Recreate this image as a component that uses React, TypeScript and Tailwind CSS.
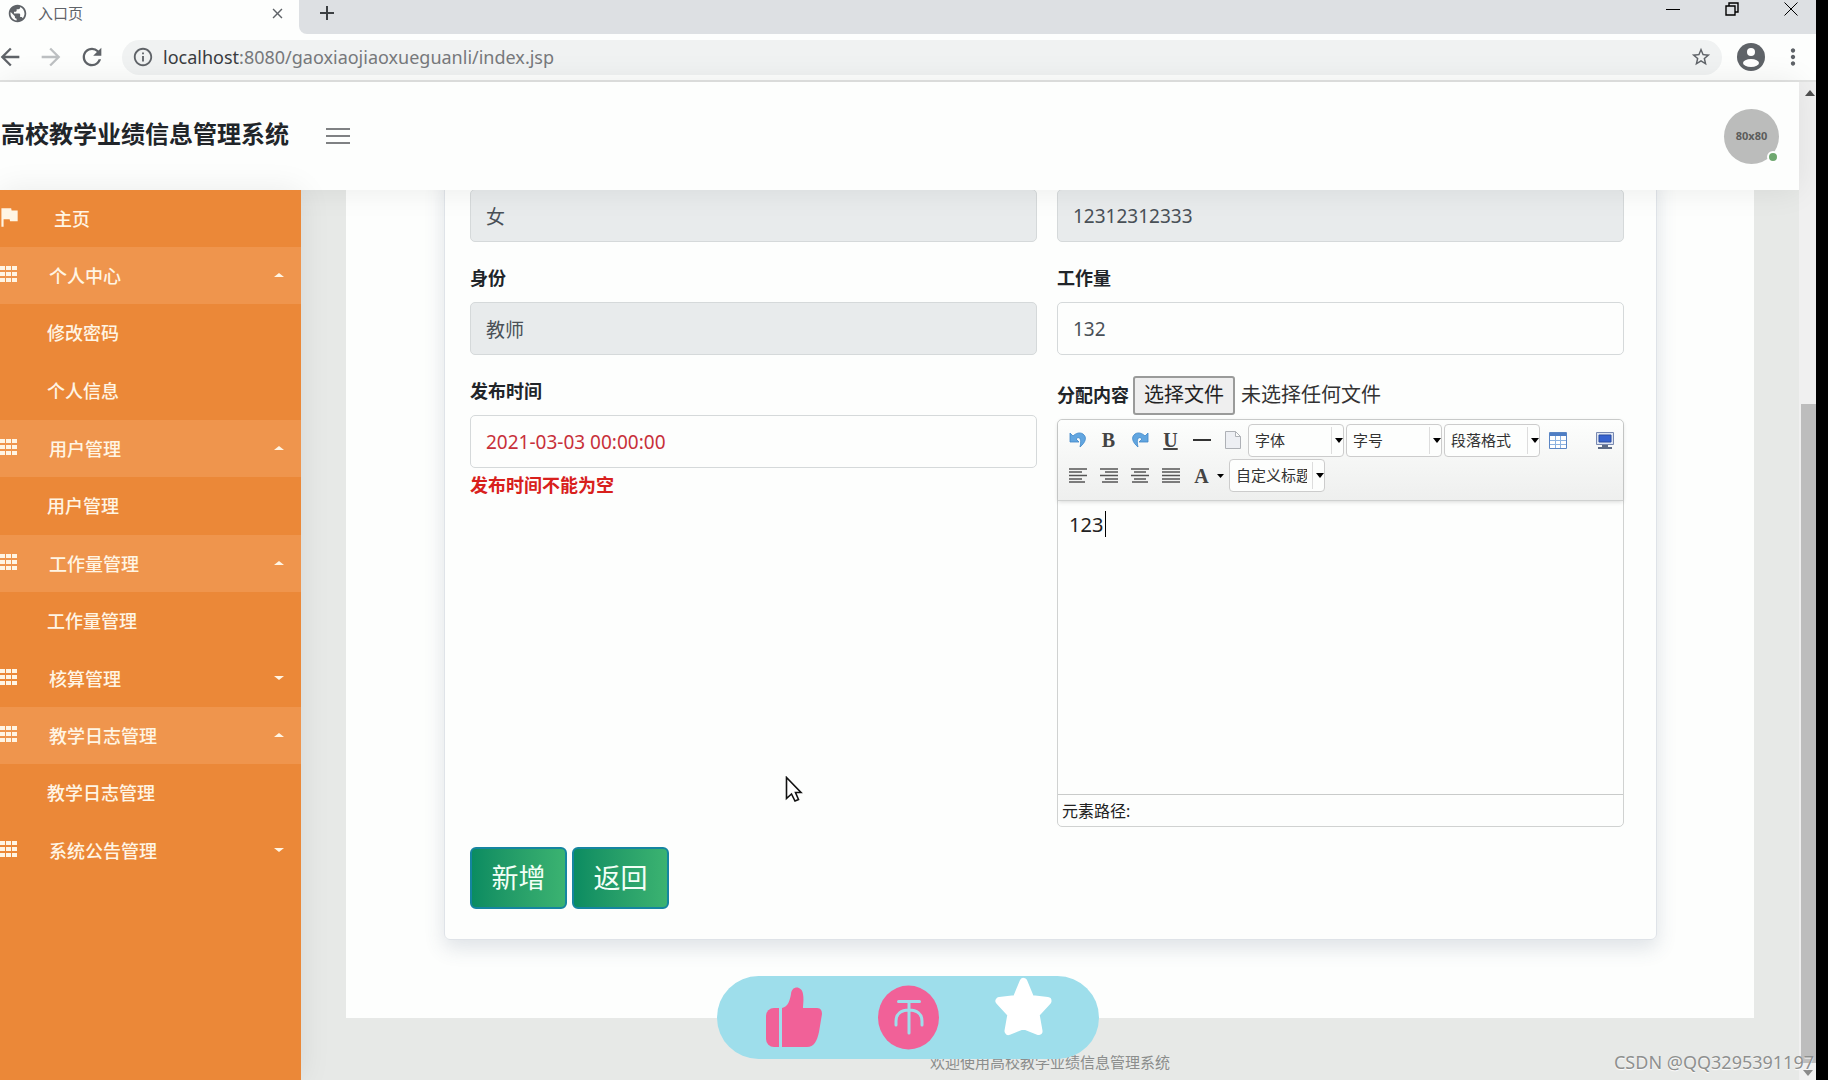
import { useRef, useState } from "react";
import type { ReactNode } from "react";
import {
  MdAdd,
  MdArrowBack,
  MdArrowForward,
  MdClose,
  MdFlag,
  MdInfoOutline,
  MdMoreVert,
  MdPublic,
  MdRefresh,
  MdStarBorder,
} from "react-icons/md";

const menus = [
  { title: "个人中心", open: true, children: ["修改密码", "个人信息"] },
  { title: "用户管理", open: true, children: ["用户管理"] },
  { title: "工作量管理", open: true, children: ["工作量管理"] },
  { title: "核算管理", open: false, children: [] },
  { title: "教学日志管理", open: true, children: ["教学日志管理"] },
  { title: "系统公告管理", open: false, children: [] },
];

function BrowserBar() {
  return (
    <div className="shrink-0">
      <div className="flex h-[34px] bg-[#fdfefd]">
        <div className="flex w-[299px] items-center pb-2 pl-[7px] pr-[13px] text-[#5f6368]">
          <MdPublic size={21} />
          <span className="ml-[10px] flex-1 text-[15px] leading-6">
            入口页
          </span>
          <button aria-label="关闭标签页">
            <MdClose size={17} />
          </button>
        </div>
        <div className="flex flex-1 rounded-bl-lg bg-[#dde0e3]">
          <div className="flex flex-1 items-center pb-2 pl-4 text-[#3c4043]">
            <button aria-label="新标签页">
              <MdAdd size={24} />
            </button>
          </div>
          <div className="flex gap-[45px] pr-[18px] pt-[2px] text-black">
            <button aria-label="最小化" className="h-[14px]">
              <svg width="14" height="14" stroke="currentColor">
                <path d="M0 7.5h14" />
              </svg>
            </button>
            <button aria-label="还原" className="h-[14px]">
              <svg
                width="14"
                height="14"
                fill="none"
                stroke="currentColor"
                strokeWidth="1.4"
              >
                <path d="M1 4h9v9H1zM4 4V1h9v9h-3" />
              </svg>
            </button>
            <button aria-label="关闭" className="h-[14px]">
              <svg width="14" height="14" stroke="currentColor">
                <path d="M.5.5l13 13M13.5.5l-13 13" />
              </svg>
            </button>
          </div>
        </div>
      </div>

      <div className="flex h-12 items-center border-b-2 border-[#e2e3e2] bg-[#fdfefd] text-[#5f6368]">
        <div className="-ml-1 mr-4 flex gap-[13px]">
          <button aria-label="后退">
            <MdArrowBack size={28} />
          </button>
          <button aria-label="前进" className="text-[#bdc0c2]">
            <MdArrowForward size={28} />
          </button>
          <button aria-label="重新加载">
            <MdRefresh size={28} />
          </button>
        </div>
        <div className="flex h-[35px] flex-1 items-center rounded-full bg-[#f0f2f2] pl-[10px] pr-[10px]">
          <MdInfoOutline size={22} />
          <span className="ml-[9px] flex-1 text-[18px] text-[#77797c]">
            <span className="text-[#3a3c3f]">localhost</span>
            :8080/gaoxiaojiaoxueguanli/index.jsp
          </span>
          <button aria-label="收藏">
            <MdStarBorder size={22} />
          </button>
        </div>
        <button aria-label="用户" className="mx-[15px]">
          <svg width="28" height="28">
            <circle cx="14" cy="14" r="14" fill="currentColor" />
            <circle cx="14" cy="9" r="4" fill="#fff" />
            <ellipse cx="14" cy="20" rx="8" ry="4" fill="#fff" />
          </svg>
        </button>
        <button aria-label="菜单" className="mr-[10px]">
          <MdMoreVert size={26} />
        </button>
      </div>
    </div>
  );
}

function Header() {
  return (
    <header className="relative z-10 flex h-[108px] shrink-0 items-center bg-[#fdfefd] pl-px pr-5 shadow-[0_0_30px_rgba(0,0,0,0.08)]">
      <h1 className="w-[325px] pb-1 text-2xl font-bold text-[#212529]">
        高校教学业绩信息管理系统
      </h1>
      <button aria-label="切换菜单" className="text-[#7f8183]">
        <svg width="24" height="18" stroke="currentColor" strokeWidth="2">
          <path d="M0 2h24M0 9h24M0 16h24" />
        </svg>
      </button>
      <div className="relative ml-auto flex size-[55px] items-center justify-center rounded-full bg-[#bbbcbb] text-[11px] font-bold text-[#5b5c5b]">
        80x80
        <span className="absolute bottom-[1px] right-0 size-3 rounded-full border-2 border-white bg-[#6fa870]" />
      </div>
    </header>
  );
}

function GridIcon() {
  return (
    <svg width="17" height="16" viewBox="0 0 17 16" fill="currentColor">
      <path d="M0 0h5v4H0zM6 0h5v4H6zM12 0h5v4h-5zM0 6h5v4H0zM6 6h5v4H6zM12 6h5v4h-5zM0 12h5v4H0zM6 12h5v4H6zM12 12h5v4h-5z" />
    </svg>
  );
}

function Sidebar() {
  return (
    <nav className="z-20 w-[301px] shrink-0 bg-[#eb8838] text-[18px] font-medium text-[#fff5e4] shadow-[0_0_30px_rgba(0,0,0,0.08)]">
      <a href="#home" className="flex h-[57px] items-center">
        <MdFlag size={26} className="-ml-1 mb-1" />
        <span className="ml-8 pt-[2px]">主页</span>
      </a>
      {menus.map((menu) => (
        <div key={menu.title}>
          <a
            href="#menu"
            className={
              menu.open
                ? "flex h-[57px] items-center bg-[#ef954d] pr-[17px]"
                : "flex h-[57px] items-center pr-[17px]"
            }
          >
            <span className="mb-1">
              <GridIcon />
            </span>
            <span className="ml-8 flex-1 pt-[2px]">{menu.title}</span>
            <svg width="10" height="4" fill="currentColor" className="mb-px">
              <path d={menu.open ? "M0 4l5-4 5 4z" : "M0 0h10L5 4z"} />
            </svg>
          </a>
          {menu.children.map((child) => (
            <a
              key={child}
              href="#sub"
              className="flex h-[58px] items-center pl-[47px]"
            >
              {child}
            </a>
          ))}
        </div>
      ))}
    </nav>
  );
}

function ToolButton({
  label,
  children,
}: {
  label: string;
  children: ReactNode;
}) {
  return (
    <button
      type="button"
      aria-label={label}
      className="flex h-8 w-[31px] items-center justify-center font-['Liberation_Serif',serif] text-[20px] font-bold text-[#444]"
    >
      {children}
    </button>
  );
}

function Combo({ label }: { label: string }) {
  return (
    <div className="mr-[2px] flex h-[33px] w-24 items-center rounded-sm border border-[#ccc] bg-[#fdfefd]">
      <select
        aria-label={label}
        className="h-[27px] w-[83px] shrink-0 appearance-none border-r border-[#ddd] pl-[6px] pr-[5px] text-[15px] text-[#333]"
      >
        <option>{label}</option>
      </select>
      <svg width="8" height="5" className="ml-[3px] shrink-0">
        <path d="M0 0h8L4 5z" />
      </svg>
    </div>
  );
}

function UndoIcon() {
  return (
    <svg width="18" height="18" viewBox="0 0 18 18">
      <path
        d="M1 2v9h9L7 8c3-3 6-1 4 8 6-5 7-10 3-13C11 1 7 2 4 5z"
        fill="#62a6e0"
        stroke="#3f86c8"
        strokeWidth=".8"
      />
    </svg>
  );
}

function Editor() {
  const [content, setContent] = useState("123");

  return (
    <div className="rounded-[5px] border border-[#d0d2d1]">
      <div className="rounded-t-[5px] border-b border-[#cfd1d0] bg-linear-to-b from-[#fdfefd] to-[#eeefee] pb-[7px] pl-1 pt-[2px] shadow-[0_1px_4px_rgba(0,0,0,0.15)]">
        <div className="flex h-[36px] items-center">
          <ToolButton label="撤销">
            <UndoIcon />
          </ToolButton>
          <ToolButton label="加粗">B</ToolButton>
          <ToolButton label="重做">
            <span className="-scale-x-100">
              <UndoIcon />
            </span>
          </ToolButton>
          <ToolButton label="下划线">
            <span className="underline">U</span>
          </ToolButton>
          <ToolButton label="分隔线">
            <svg width="18" height="2">
              <path d="M0 0h18v2H0z" fill="#333" />
            </svg>
          </ToolButton>
          <ToolButton label="清空文档">
            <svg width="16" height="18" fill="#edeff3" stroke="#aeb1b6">
              <path d="M.5.5h10l5 5v12H.5zM10.500.5v5h5" />
            </svg>
          </ToolButton>
          <Combo label="字体" />
          <Combo label="字号" />
          <Combo label="段落格式" />
          <ToolButton label="插入表格">
            <svg width="18" height="17">
              <path d="M.5.5h17v16H.5z" fill="#fff" stroke="#5b86c4" />
              <path d="M1 1h16v3H1z" fill="#4f7ec4" />
              <path
                d="M1 8.500h16M1 12.500h16M6.500 4v12M11.500 4v12"
                stroke="#8cb2e0"
              />
            </svg>
          </ToolButton>
          <span className="w-4" />
          <ToolButton label="全屏">
            <svg width="18" height="17">
              <path d="M.5.5h17v12H.5z" fill="#dfe5f2" stroke="#7889b0" />
              <path d="M3 3h12v7H3z" fill="#3763cf" stroke="#2b4c9f" />
              <path d="M6 13h6v2H6zM2 15h14v2H2z" fill="#5d6b86" />
            </svg>
          </ToolButton>
        </div>
        <div className="flex h-[35px] items-center">
          <ToolButton label="左对齐">
            <svg width="18" height="15" stroke="#555" strokeWidth="1.500">
              <path d="M0 1h18M0 4h13M0 7.500h18M0 11h13M0 14h16" />
            </svg>
          </ToolButton>
          <ToolButton label="右对齐">
            <svg width="18" height="15" stroke="#555" strokeWidth="1.500">
              <path d="M0 1h18M5 4h13M0 7.500h18M5 11h13M2 14h16" />
            </svg>
          </ToolButton>
          <ToolButton label="居中对齐">
            <svg width="18" height="15" stroke="#555" strokeWidth="1.500">
              <path d="M0 1h18M3 4h12M0 7.500h18M3 11h12M1 14h16" />
            </svg>
          </ToolButton>
          <ToolButton label="两端对齐">
            <svg width="18" height="15" stroke="#555" strokeWidth="1.500">
              <path d="M0 1h18M0 4h18M0 7.500h18M0 11h18M0 14h18" />
            </svg>
          </ToolButton>
          <ToolButton label="字体颜色">A</ToolButton>
          <svg width="7" height="4" className="mr-[5px]">
            <path d="M0 0h7L3.500 4z" />
          </svg>
          <Combo label="自定义标题" />
        </div>
      </div>
      <div className="relative h-[293px]">
        <textarea
          aria-label="分配内容"
          value={content}
          onChange={(e) => setContent(e.target.value)}
          className="block h-full w-full resize-none px-[11px] py-2 text-[20px] leading-8 text-[#222] outline-none"
        />
        <span className="absolute left-[47px] top-[10px] h-[26px] w-px bg-black" />
      </div>
      <div className="h-8 border-t border-[#c9cbca] pl-1 pt-px text-[16px] leading-[30px] text-[#222]">
        元素路径:
      </div>
    </div>
  );
}

function Field({
  id,
  label,
  hideLabel,
  value,
  readOnly,
  error,
}: {
  id: string;
  label: string;
  hideLabel?: boolean;
  value: string;
  readOnly?: boolean;
  error?: string;
}) {
  const [text, setText] = useState(value);
  let look = "bg-[#fdfefd] text-[#495057]";
  if (readOnly) look = "bg-[#e8ebec] text-[#495057]";
  if (error) look = "bg-[#fdfefd] text-[#c8303a]";

  return (
    <div>
      {!hideLabel && (
        <label
          htmlFor={id}
          className="mb-2 block h-8 text-[18px] font-bold leading-8 text-[#212529]"
        >
          {label}
        </label>
      )}
      <input
        id={id}
        aria-label={label}
        value={text}
        readOnly={readOnly}
        onChange={(e) => setText(e.target.value)}
        className={`block h-[53px] w-full rounded-[5px] border border-[#d5d9da] px-[15px] text-[19px] ${look}`}
      />
      {error && (
        <p className="pt-1 text-[18px] font-bold leading-[26px] text-[#d8201c]">
          {error}
        </p>
      )}
    </div>
  );
}

function WorkloadForm() {
  const fileRef = useRef<HTMLInputElement>(null);

  return (
    <form
      onSubmit={(e) => e.preventDefault()}
      className="-mt-5 ml-[98px] mr-[97px] rounded-md border border-[#dfe3e8] pb-[30px] pl-[25px] pr-8 pt-[18px] shadow-[0_8px_20px_rgba(60,80,110,0.16)]"
    >
      <div className="grid grid-cols-2 gap-5">
        <Field id="gender" label="性别" value="女" hideLabel readOnly />
        <Field
          id="phone"
          label="手机"
          value="12312312333"
          hideLabel
          readOnly
        />
        <Field id="role" label="身份" value="教师" readOnly />
        <Field id="workload" label="工作量" value="132" />
        <Field
          id="publish-time"
          label="发布时间"
          value="2021-03-03 00:00:00"
          error="发布时间不能为空"
        />
        <div>
          <div className="mb-1 flex h-10 items-center text-[20px]">
            <label
              htmlFor="attachment"
              className="mr-1 text-[18px] font-bold text-[#212529]"
            >
              分配内容
            </label>
            <input
              id="attachment"
              ref={fileRef}
              type="file"
              className="hidden"
            />
            <button
              type="button"
              onClick={() => fileRef.current?.click()}
              className="h-[39px] rounded-[3px] border-2 border-[#9a9b9a] bg-[#efefef] px-[9px] text-[#222]"
            >
              选择文件
            </button>
            <span className="ml-[6px] text-[#333]">未选择任何文件</span>
          </div>
          <Editor />
        </div>
      </div>
      <div className="mt-5 flex gap-[5px]">
        <button
          type="submit"
          className="h-[62px] w-[97px] rounded-md border-2 border-[#1585a0] bg-linear-to-r from-[#0a8c61] to-[#3bb371] text-[27px] text-[#f2fff6]"
        >
          新增
        </button>
        <button
          type="button"
          className="h-[62px] w-[97px] rounded-md border-2 border-[#1585a0] bg-linear-to-r from-[#0a8c61] to-[#3bb371] text-[27px] text-[#f2fff6]"
        >
          返回
        </button>
      </div>
    </form>
  );
}

function LikeBar() {
  return (
    <div className="absolute bottom-[21px] left-1/2 z-30 h-[83px] w-[382px] -translate-x-1/2 rounded-full bg-[#9edeeb]">
      <svg viewBox="0 0 382 83" className="h-full w-full" fill="#f16198">
        <path d="M57 32h5v39h-5a8 8 0 0 1-8-8V40a8 8 0 0 1 8-8z" />
        <path d="M65 32c6-1 8-8 9-14 1-9 11-8 12 0 1 6 0 10 0 14h14c4 0 5 3 5 6l-3 18c-2 9-5 15-12 15H65z" />
        <ellipse cx="191.500" cy="41.500" rx="30.500" ry="32" />
        <path
          d="M181.500 25.500h21M192 26v31M179 49v-4c0-7 5-11 13-11s13 4 13 11v4"
          fill="none"
          stroke="#9edeeb"
          strokeWidth="3"
          strokeLinecap="round"
        />
        <path
          d="M306.500 6l7 17 17 2-12 13 3 17-15-6-15 6 3-17-12-13 17-2z"
          fill="#fff"
          stroke="#fff"
          strokeWidth="8"
          strokeLinejoin="round"
        />
      </svg>
    </div>
  );
}

function App() {
  return (
    <div className="h-screen overflow-hidden bg-black pr-3 font-['Noto_Sans','Noto_Sans_CJK_SC',sans-serif]">
      <div className="relative flex h-full flex-col overflow-hidden">
        <BrowserBar />
        <div className="flex min-h-0 flex-1">
          <div className="flex min-w-0 flex-1 flex-col">
            <Header />
            <div className="flex min-h-0 flex-1">
              <Sidebar />
              <main className="flex min-w-0 flex-1 flex-col overflow-hidden bg-[#e7e9e7]">
                <div className="ml-[45px] mr-[45px] bg-[#fdfefd] pb-[78px]">
                  <WorkloadForm />
                </div>
                <footer className="pt-8 text-center text-[15px] leading-6 text-[#8b8d8c]">
                  欢迎使用高校教学业绩信息管理系统
                </footer>
              </main>
            </div>
          </div>
          <div className="flex w-[17px] flex-col items-center bg-[#f0f0f0] pt-2">
            <svg width="10" height="6" fill="#505050" className="ml-[5px]">
              <path d="M0 6l5-6 5 6z" />
            </svg>
            <div className="mb-[15px] mt-[308px] w-[15px] flex-1 self-end bg-[#bdbdbd]" />
            <svg width="10" height="6" fill="#8a8a8a" className="-mt-2 mb-1">
              <path d="M0 0h10L5 6z" />
            </svg>
          </div>
        </div>

        <LikeBar />

        <svg
          width="18"
          height="27"
          viewBox="0 0 18 27"
          className="absolute left-[785px] top-[776px]"
        >
          <path
            d="M1.500 1.500v21l5-4.500 3.500 7 3.500-1.500-3-7H16z"
            fill="#fff"
            stroke="#111"
            strokeWidth="1.600"
          />
        </svg>
        <span className="absolute bottom-[6px] right-[2px] z-30 text-[18px] leading-6 text-[#8e908f] [text-shadow:0_1px_1px_#fff]">
          CSDN @QQ3295391197
        </span>
      </div>
    </div>
  );
}

export default App;
